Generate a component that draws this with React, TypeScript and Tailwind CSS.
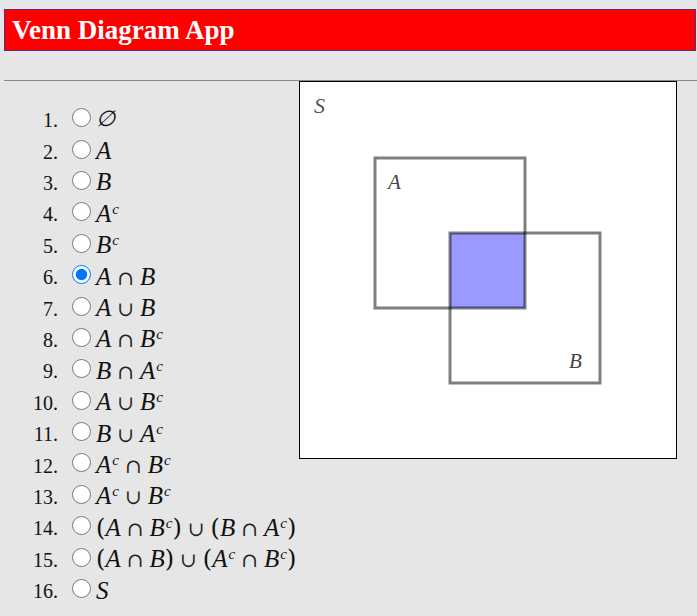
import React from 'react';

const V = ({ children }: { children: React.ReactNode }) => (
  <span className="italic">{children}</span>
);

const Sup = () => (
  <span className="relative -top-[8px] ml-[1px] text-[15px] italic">c</span>
);

const Op = ({ children }: { children: React.ReactNode }) => (
  <span className="mx-[6px] font-['DejaVu_Serif'] text-[20px] font-normal text-[#222]">{children}</span>
);

const P = ({ children }: { children: React.ReactNode }) => (
  <span className="font-['DejaVu_Serif'] text-[24px] font-light">{children}</span>
);

const options: React.ReactNode[] = [
  <span className="font-['DejaVu_Serif'] text-[22px] italic">∅</span>,
  <V>A</V>,
  <V>B</V>,
  <>
    <V>A</V>
    <Sup />
  </>,
  <>
    <V>B</V>
    <Sup />
  </>,
  <>
    <V>A</V>
    <Op>∩</Op>
    <V>B</V>
  </>,
  <>
    <V>A</V>
    <Op>∪</Op>
    <V>B</V>
  </>,
  <>
    <V>A</V>
    <Op>∩</Op>
    <V>B</V>
    <Sup />
  </>,
  <>
    <V>B</V>
    <Op>∩</Op>
    <V>A</V>
    <Sup />
  </>,
  <>
    <V>A</V>
    <Op>∪</Op>
    <V>B</V>
    <Sup />
  </>,
  <>
    <V>B</V>
    <Op>∪</Op>
    <V>A</V>
    <Sup />
  </>,
  <>
    <V>A</V>
    <Sup />
    <Op>∩</Op>
    <V>B</V>
    <Sup />
  </>,
  <>
    <V>A</V>
    <Sup />
    <Op>∪</Op>
    <V>B</V>
    <Sup />
  </>,
  <>
    <P>(</P>
    <V>A</V>
    <Op>∩</Op>
    <V>B</V>
    <Sup />
    <P>)</P>
    <Op>∪</Op>
    <P>(</P>
    <V>B</V>
    <Op>∩</Op>
    <V>A</V>
    <Sup />
    <P>)</P>
  </>,
  <>
    <P>(</P>
    <V>A</V>
    <Op>∩</Op>
    <V>B</V>
    <P>)</P>
    <Op>∪</Op>
    <P>(</P>
    <V>A</V>
    <Sup />
    <Op>∩</Op>
    <V>B</V>
    <Sup />
    <P>)</P>
  </>,
  <V>S</V>,
];

const Diagram = () => (
  <div className="h-[378px] w-[378px] shrink-0 border border-black bg-white">
    <svg width="376" height="376" viewBox="0 0 376 376">
      <rect x="150" y="151" width="75" height="75" fill="#9999ff" />
      <rect x="75" y="76" width="150" height="150" fill="none" stroke="black" strokeOpacity="0.5" strokeWidth="3" />
      <rect x="150" y="151" width="150" height="150" fill="none" stroke="black" strokeOpacity="0.5" strokeWidth="3" />
      <text x="14" y="31" fontFamily="Liberation Serif" fontStyle="italic" fontSize="22" fill="#555">S</text>
      <text x="88" y="107" fontFamily="Liberation Serif" fontStyle="italic" fontSize="21" fill="#444">A</text>
      <text x="269" y="286" fontFamily="Liberation Serif" fontStyle="italic" fontSize="21" fill="#444">B</text>
    </svg>
  </div>
);

export default function App() {
  return (
    <div className="min-h-screen bg-[#e6e6e6] pt-[9px] font-['Liberation_Serif',serif] text-[#111]">
      <div className="ml-[4px] mr-[1px] flex h-[42px] items-center border border-[#5b2a86] bg-[#ff0000] pl-[7px]">
        <h1 className="text-[27px] leading-none font-bold text-white">Venn Diagram App</h1>
      </div>
      <div className="ml-[4px] mt-[29px] h-px bg-[#888]" />
      <div className="flex">
        <ol className="mt-[21px] w-[299px]">
          {options.map((node, i) => (
            <li key={i} className="flex h-[31.4px] items-center">
              <span className="w-[58px] pt-[5px] text-right text-[20px]">{i + 1}.</span>
              <input
                type="radio"
                name="set"
                defaultChecked={i === 5}
                className="m-0 ml-[14px] h-[19px] w-[19px]"
              />
              <span className="ml-[5px] flex items-baseline pt-[3px] text-[25px] leading-none whitespace-nowrap">
                {node}
              </span>
            </li>
          ))}
        </ol>
        <Diagram />
      </div>
    </div>
  );
}
